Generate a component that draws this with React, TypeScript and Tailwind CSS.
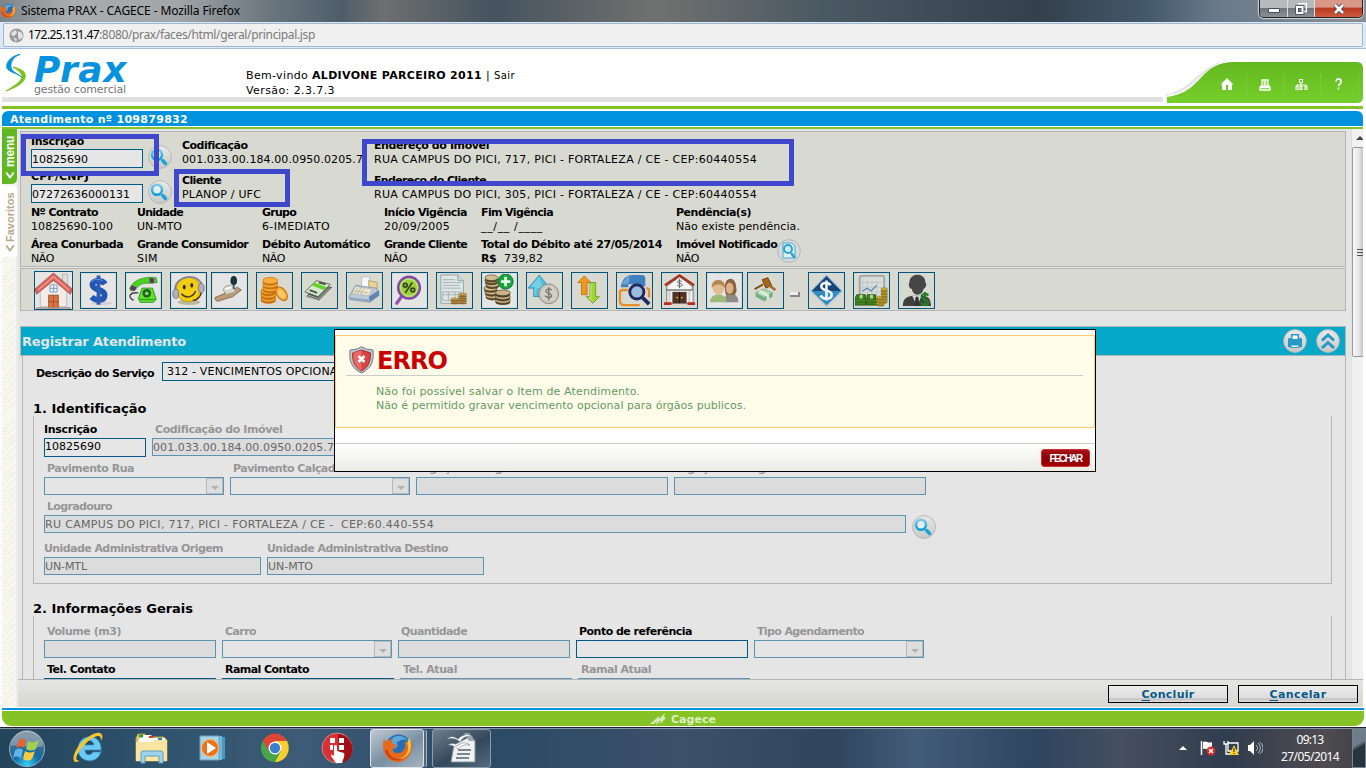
import { useLayoutEffect, useRef, useState } from "react";
import type { ReactNode } from "react";

const UI = "font-['Noto_Sans',sans-serif]";

/** A single line of text, letter-spaced so that it takes up `w` pixels. */
function Fit({ w, className = "", children }: { w: number; className?: string; children: ReactNode }) {
  const ref = useRef<HTMLSpanElement>(null);
  const [ls, setLs] = useState(0);
  useLayoutEffect(() => {
    const el = ref.current;
    if (!el) return;
    const len = (el.textContent || "").length;
    if (len > 0) setLs((w - el.getBoundingClientRect().width) / len);
  }, [w]);
  return (
    <span ref={ref} style={{ letterSpacing: ls + "px" }} className={"inline-block whitespace-pre " + className}>
      {children}
    </span>
  );
}

function Lens({ className = "" }: { className?: string }) {
  return (
    <svg className={"size-6 shrink-0 " + className} viewBox="0 0 24 24">
      <defs>
        <linearGradient id="disc" x1="0" y1="0" x2="0" y2="1">
          <stop offset="0" stopColor="#e9e9e9" />
          <stop offset="1" stopColor="#c9c9c9" />
        </linearGradient>
        <linearGradient id="lens" x1="0" y1="0" x2="0" y2="1">
          <stop offset="0" stopColor="#7cc8e6" />
          <stop offset="1" stopColor="#0a9fd2" />
        </linearGradient>
      </defs>
      <circle cx="12" cy="12" r="11.4" fill="url(#disc)" stroke="#b5b5b5" />
      <circle cx="9" cy="9.8" r="5" fill="#e4edf2" stroke="url(#lens)" strokeWidth="2.6" />
      <path d="M14.7 15.6l2.8 2.9" stroke="#18a5d6" strokeWidth="3.6" strokeLinecap="round" />
    </svg>
  );
}

function Stacked({ label, value, w, cls = "", lw, vw, prefix }: { label: string; value: string; w: number; cls?: string; lw: number; vw: number; prefix?: ReactNode }) {
  return (
    <div className={"shrink-0 leading-[14px] " + cls} style={{ width: w }}>
      <div className="h-[14px] font-bold"><Fit w={lw}>{label}</Fit></div>
      <div className="h-[14px]">{prefix}<Fit w={vw}>{value}</Fit></div>
    </div>
  );
}

type FieldProps = { label: string; lw: number; w: number; pad?: number; value?: string; vw?: number; on?: boolean; select?: boolean; tall?: boolean };
function Field({ label, lw, w, pad = 3, value, vw = 0, on, select, tall }: FieldProps) {
  return (
    <div className="shrink-0" style={{ width: w }}>
      <div className={"mb-px h-[14px] font-bold leading-[14px] " + (on ? "text-black" : "text-[#969696]")} style={{ paddingLeft: pad }}>
        <Fit w={lw}>{label}</Fit>
      </div>
      <div className={"flex justify-end border " + (tall ? "h-[19px] leading-[16px] " : "h-[18px] leading-[18px] ") + (on ? "border-[#005a87] bg-[#e6e6e6]" : select ? "border-[#5b93b1] bg-[#e5e5e5] text-[#666]" : "border-[#5b93b1] bg-[#dcdcdc] text-[#666]")}>
        {value && <span className="mr-auto"><Fit w={vw}>{value}</Fit></span>}
        {select && (
          <span className="flex h-[16px] w-[17px] items-center justify-center border border-[#b9b9b9] bg-[#dedede]">
            <svg className="mt-[3px] h-1 w-2" viewBox="0 0 8 4"><path d="M0 0h8L4 4z" fill="#b0b0b0" /></svg>
          </span>
        )}
      </div>
    </div>
  );
}

const coin = (x: number, y: number, rx: number, ry: number, f: string, s: string, k: string | number) => (
  <g key={k}><ellipse cx={x} cy={y + 2} rx={rx} ry={ry} fill={s} /><ellipse cx={x} cy={y} rx={rx} ry={ry} fill={f} stroke={s} strokeWidth=".7" /></g>
);

const tools: { gap: string; art: ReactNode; big?: boolean; plate?: boolean }[] = [
  { gap: "ml-[13px]", big: true, art: <>
    <rect x="26" y="2" width="5" height="10" fill="#ddd" stroke="#aaa" strokeWidth=".7" />
    <path d="M5 17L18 5l12 12v16H5z" fill="#f2ece9" stroke="#c9c0bd" />
    <path d="M0 16L17.500 1 35 16l-1.500 5L17.500 8 1.500 21z" fill="#e0675e" stroke="#a94b46" strokeWidth=".8" />
    <path d="M3 17L17.500 4.500 32 17" fill="none" stroke="#f0a09a" />
    <rect x="14" y="12" width="7" height="7" rx="2" fill="#eef4fb" stroke="#8fa3ca" /><path d="M17.500 12v7M14 15.500h7" stroke="#8fa3ca" />
    <rect x="13" y="22" width="9" height="12" fill="#dc7440" stroke="#a05832" /><path d="M17.500 22v12M13 28h9" stroke="#b0562c" />
    <path d="M1 34h33" stroke="#a9918d" strokeWidth="1.500" /></> },
  { gap: "ml-[7px]", plate: true, art: <>
    <ellipse cx="21" cy="31" rx="11" ry="2" fill="#cdd0d4" />
    <path d="M24.500 10.500C22 6.500 11 5.500 11 11.500c0 6.500 13 4 13 11 0 6.500-10 6-14 2" fill="none" stroke="#2555b2" strokeWidth="6" />
    <path d="M17.500 1.500v31" stroke="#2c5cb8" strokeWidth="4" /><path d="M10 9c2-4 8-4 12-2" stroke="#6b9de5" strokeWidth="1" fill="none" /></> },
  { gap: "ml-2", plate: true, art: <>
    <path d="M7 28c-7-4-4-9 5-8" fill="none" stroke="#47404a" strokeWidth="1.500" />
    <path d="M3 15C7 5 22 2 31 4l1 5-9 1C17 9 11 12 9 17l-5 1z" fill="#4bd323" stroke="#228615" strokeWidth=".7" /><path d="M5 12l5 2-2 4-5-2zM24 4l5 1-1 5-4-1z" fill="#62306d" />
    <path d="M16 15h11l4 12-3 3H14l-2-4z" fill="#5be328" stroke="#2b971a" /><circle cx="21" cy="20.500" r="4.500" fill="#235c1b" /><circle cx="21" cy="20.500" r="2" fill="#84d467" /><path d="M13 27h17" stroke="#2f941c" /></> },
  { gap: "ml-2", plate: true, art: <>
    <ellipse cx="18" cy="30" rx="12" ry="3" fill="#b9b6a1" /><circle cx="17.500" cy="16.500" r="13" fill="#f3ce11" stroke="#c2970a" />
    <path d="M3 18C2 1 30-3 32 14" fill="none" stroke="#85858f" strokeWidth="2" />
    <ellipse cx="4" cy="21" rx="3" ry="5" fill="#b1b1bf" stroke="#75757f" /><ellipse cx="31" cy="15" rx="3" ry="5" fill="#b1b1bf" stroke="#75757f" />
    <ellipse cx="13" cy="14" rx="1.500" ry="2.500" fill="#33290a" /><ellipse cx="21" cy="12" rx="1.500" ry="2.500" fill="#33290a" />
    <path d="M10 21c5 6 13 3 15-3M31 20c-1 5-5 8-9 8" fill="none" stroke="#463510" strokeWidth="1.500" /></> },
  { gap: "ml-1", plate: true, art: <>
    <path d="M2 25l12-5 12-6 4 3-9 7-16 5-2-1z" fill="#bd9c78" stroke="#755b42" strokeWidth=".8" /><path d="M11 17c0-5 8-7 11-2l2 4-10 3z" fill="#d6d6ca" stroke="#909086" strokeWidth=".8" />
    <ellipse cx="22" cy="7" rx="3.500" ry="5" fill="#16363c" /><path d="M22 11v5" stroke="#45636a" strokeWidth="2" /><path d="M13 16l7-2" stroke="#fff" strokeWidth="2" /></> },
  { gap: "ml-2", art: <>
    {[26, 22, 18].map((y) => coin(11, y, 8, 3.5, "#f3a42e", "#c77211", y))}
    {[15, 11, 7].map((y) => coin(13, y, 8, 3.5, "#f8ae3d", "#c77211", y))}
    <ellipse cx="25" cy="21" rx="5" ry="8" transform="rotate(-35 25 21)" fill="#f9ad3b" stroke="#c77211" strokeWidth="1.200" /><ellipse cx="25" cy="21" rx="3" ry="5" transform="rotate(-35 25 21)" fill="#ffc96a" /></> },
  { gap: "ml-2", art: <>
    <path d="M3 24L14 9l17 5-14 14z" fill="#4a514a" /><path d="M2 19L14 7l15 4-13 13z" fill="#d9e6cf" stroke="#404b3d" strokeWidth=".8" />
    <path d="M9 12l13 5 3-3-13-5z" fill="#64d421" /><path d="M7 17l8 3M17 9l7 2" stroke="#455a3e" strokeWidth="2" />
    <path d="M2 21l14 5 13-13M3 23l13 5 13-13" stroke="#cfd6cc" strokeWidth=".8" fill="none" /></> },
  { gap: "ml-2", art: <>
    <path d="M15 3h8l-1 12h-8z" fill="#f7f8fb" stroke="#aeb8c6" strokeWidth=".8" /><path d="M22 7l9 2v7l-9-2z" fill="#e9d392" stroke="#a79864" strokeWidth=".8" />
    <path d="M1 24l7-12 22 3 3 7-10 8-21-3z" fill="#bdc9d7" stroke="#7d92a9" strokeWidth=".8" /><path d="M8 13l18 3-4 7-18-2z" fill="#eee6cc" stroke="#a4abb5" strokeWidth=".7" />
    <path d="M11 14l-4 7M14 14l-4 7M17 15l-4 7M7 18l14 2" stroke="#a8a693" strokeWidth=".7" /><path d="M22 24l11-7v6l-10 7z" fill="#6386b1" /><path d="M2 25l20 2v2L2 27z" fill="#8da6c2" /></> },
  { gap: "ml-2", plate: true, art: <>
    <path d="M9 24L4 31" stroke="#9450b5" strokeWidth="3.500" strokeLinecap="round" /><circle cx="17" cy="14.500" r="11.500" fill="#a3dc49" stroke="#8647ac" strokeWidth="2.600" />
    <circle cx="17" cy="14.500" r="9" fill="#9bd13e" stroke="#c9ec87" /><path d="M20.500 9L13 20" stroke="#33451a" strokeWidth="1.800" /><circle cx="13" cy="12" r="2" fill="none" stroke="#33451a" strokeWidth="1.800" /><circle cx="21" cy="17" r="2" fill="none" stroke="#33451a" strokeWidth="1.800" /></> },
  { gap: "ml-2", art: <>
    <path d="M3 1h18l6 6v24H3z" fill="#dfe6e3" stroke="#8ca4ae" /><path d="M21 1v6h6" fill="#cad7d7" stroke="#8ca4ae" />
    <path d="M5 6h13M5 9h20M5 12h18M5 15h19M5 19h20v9H5zM5 22h20M11 19v9M18 19v9" fill="none" stroke="#a3b2b5" />
    {[29, 26.5].map((y) => coin(18, y, 4.5, 1, "#dfb468", "#8f692b", "a" + y))}{[29, 26.5, 24, 21.5].map((y) => coin(26, y, 4.5, 1, "#dfb468", "#8f692b", "b" + y))}</> },
  { gap: "ml-2", plate: true, art: <>
    {[23, 19, 15, 11, 7, 4].map((y) => coin(8 + (y % 3), y, 7, 3, "#d0bf91", "#59472a", y))}{[28, 24, 20].map((y) => coin(21, y, 8, 3, "#c7b384", "#504027", "c" + y))}
    <circle cx="24" cy="8" r="8" fill="#19a33d" stroke="#0e752a" /><path d="M24 3v10M19 8h10" stroke="#e6ffe9" strokeWidth="3" /></> },
  { gap: "ml-2", art: <>
    <path d="M0 15L12 1l11 14h-5v9H6v-9z" fill="#51bddc" stroke="#2c8baf" strokeWidth=".8" /><path d="M3 13L12 3l3 10-6 3-1 7H7V14z" fill="#82d5eb" opacity=".7" />
    <circle cx="22" cy="21" r="10.500" fill="#c9c5b9" stroke="#8b8982" /><circle cx="22" cy="21" r="8.500" fill="#d2cfc5" /><path d="M25 17c-2-2-6-1-6 1 0 3 6 2 6 5 0 2-5 3-7 0M22 14v14" stroke="#7b786d" strokeWidth="1.500" fill="none" /></> },
  { gap: "ml-2", art: <>
    <path d="M5 9l7-7 7 7h-4v13H9V9z" fill="#ee9821" stroke="#b36b0e" strokeWidth=".8" /><path d="M14 24h4V9h6v15h4l-7 7z" fill="#9bd732" stroke="#668f1c" strokeWidth=".8" /><path d="M19 11v14h-2l4 4" stroke="#d3f07d" fill="none" /></> },
  { gap: "ml-2", art: <>
    <path d="M3 14C4 6 8 1 16 1h9q4 0 4 4v8h-8v-2H11v3z" fill="#4080c0" /><path d="M3 11L12 1v6q0 4-4 4z" fill="#6fa1d4" />
    <path d="M11 17H5q-3 0-3 3v8q0 5 5 5h16M30 15q3 0 3 3v7" stroke="#e88e28" strokeWidth="2.500" fill="none" />
    <circle cx="20" cy="19" r="7.500" fill="#9abde0" stroke="#23285e" strokeWidth="3" /><path d="M26 25l7 7" stroke="#23285e" strokeWidth="4" /></> },
  { gap: "ml-2", art: <>
    <path d="M4 13h28v18H4z" fill="#f1f1f1" stroke="#777" /><path d="M4 13L17.500 3 31 13v4H4z" fill="#f5f5f5" stroke="#777" /><path d="M2 12L17.500 1.500 33 12" stroke="#a8321d" strokeWidth="2.500" fill="none" />
    <path d="M3 17h29" stroke="#777" /><rect x="10" y="19" width="15" height="12" fill="#523321" /><path d="M17.500 19v12" stroke="#221710" /><circle cx="15" cy="25" r="1" fill="#e8b33e" /><circle cx="20" cy="25" r="1" fill="#e8b33e" />
    <path d="M7 18v12M28 18v12" stroke="#ccc" strokeWidth="2" /><path d="M1 30h8v3H1zM26 30h8v3h-8z" fill="#bd2a1c" /><path d="M20 8c-5-3-6 2-2 2s3 5-3 2M17.500 5v10" stroke="#666" fill="none" /></> },
  { gap: "ml-2", plate: true, art: <>
    <path d="M18 30v-4c0-7 12-9 14 2v2z" fill="#8e8983" /><path d="M18 17c-2-15 12-16 12-2 1 4-1 6-2 7h-9z" fill="#8c613e" /><ellipse cx="23" cy="15" rx="4" ry="6" fill="#dbb18b" />
    <path d="M2 30c0-11 18-11 18 0z" fill="#9cbb7a" /><ellipse cx="11" cy="15" rx="6" ry="7" fill="#e4bc93" /><path d="M4 15C3 3 19 3 18 15c-2-4-10-6-14 0z" fill="#b28a4e" /></> },
  { gap: "ml-1", art: <>
    <path d="M7 20l8-4 10 4v4l-9 5-9-5z" fill="#70b286" /><path d="M7 20l8-4 10 4-9 5z" fill="#b3ddb5" stroke="#66a878" strokeWidth=".7" /><path d="M11 18l9 5v4" stroke="#e4eee2" strokeWidth="2.500" fill="none" />
    <path d="M15 11l-9 5" stroke="#815115" strokeWidth="2" /><path d="M14 6l6-2 4 8-6 3z" fill="#a56621" stroke="#69400f" /><path d="M20 11l8 6" stroke="#a56621" strokeWidth="2.500" /></> },
  { gap: "ml-6", art: <>
    <path d="M17.500 1L34 18 17.500 34 1 18z" fill="#1c5489" stroke="#afc6db" strokeWidth="1.500" /><path d="M2 18h31L17.500 33z" fill="#3fa4d3" opacity=".7" /><path d="M2 18L17.500 2 33 18z" fill="#123a72" opacity=".6" />
    <path d="M22 12c-3-4-10-3-10 1 0 6 11 3 11 9 0 5-8 6-12 1M17.500 7v21" stroke="#edf2f6" strokeWidth="2.800" fill="none" /></> },
  { gap: "ml-2", art: <>
    <rect x="5" y="2" width="26" height="24" rx="2" fill="#d9dedd" stroke="#a0a6a6" strokeWidth="2" /><path d="M8 4v20M13 4v20M18 4v20M23 4v20M7 9h22M7 14h22M7 19h22" stroke="#b5bbba" strokeWidth=".6" /><path d="M8 18l5-3 4 3 6-6" stroke="#5480a3" strokeWidth="1.200" fill="none" />
    <path d="M2 22h9v11H0v-7zM13 22h9v4l2 7H12z" fill="#43831f" stroke="#255712" /><path d="M2 26h21M1 30h22" stroke="#2e6617" strokeWidth=".8" /><path d="M5 22h3v4H5zM16 22h3v4h-3z" fill="#b9d794" />
    {[31, 28, 25].map((y) => coin(27, y, 4.5, 1.5, "#d3b03a", "#937b21", "l" + y))}{[28, 25, 22, 19, 16].map((y) => coin(31, y, 3.5, 1.5, "#d3b03a", "#937b21", y))}</> },
  { gap: "ml-2", art: <>
    <path d="M3 34c0-8 4-10 10-11h11c7 1 8 3 9 11z" fill="#404040" /><path d="M10 9c0-11 17-11 17 0 2 2 0 6-2 7-1 4-3 6-6.500 6s-5-2-6-6c-3-1-4-5-2.500-7z" fill="#464646" /><path d="M13 23l5 11 5-11" fill="#ddd" /><path d="M16.500 24h3l1 10h-5z" fill="#333" />
    <path d="M30 23c-2-3-7-2-7 1 0 4 7 2 7 6 0 4-6 4-8 0M26.500 19v15" stroke="#277926" strokeWidth="2.300" fill="none" /></> },
];

function WindowBar() {
  return (
    <div className={"h-[49px] bg-[#dce8f4] " + UI}>
      <div className="flex h-[22px] justify-between bg-[linear-gradient(90deg,#7d8589_0,#a9adaf_5%,#a2a6a8_13%,#6f7a82_19%,#4e5d69_25%,#6e6f70_28%,#45535e_36%,#70716f_48%,#4b5963_60%,#34404b_76%,#44596c_84%,#68798a_89%,#8b8f93_100%)]">
        <div className="flex items-start gap-[5px] text-[12px] leading-[22px] text-black">
          <FirefoxIcon cls="mt-[3px] size-4" />
          <Fit w={219}>Sistema PRAX - CAGECE - Mozilla Firefox</Fit>
        </div>
        <div className="mr-[3px] flex h-[18px] overflow-hidden rounded-b-[5px] border border-t-0 border-[#20272d] shadow-[0_0_1px_1px_#cfd4d8]">
          <span className="flex w-7 items-center justify-center border-r border-[#d9dde0] bg-[linear-gradient(#b6babd_45%,#70777c_50%,#8a9095)]">
            <span className="mt-[3px] h-[5px] w-[12px] rounded-[1px] border border-[#454c58] bg-white" />
          </span>
          <span className="flex w-[27px] items-center justify-center border-r border-[#d9dde0] bg-[linear-gradient(#b6babd_45%,#70777c_50%,#8a9095)]">
            <svg className="size-3" viewBox="0 0 12 12"><path d="M3 .5h8.500v8H9" fill="none" stroke="#fff" strokeWidth="1.500" /><path d="M2 4h5.500v6H2z" fill="#777" stroke="#454c58" strokeWidth="3.500" /><path d="M2 4h5.500v6H2z" fill="none" stroke="#fff" strokeWidth="2" /></svg>
          </span>
          <span className="flex w-[47px] items-center justify-center bg-[linear-gradient(#d99887_40%,#b93a23_50%,#ce5b3c)]">
            <svg className="h-3 w-3" viewBox="0 0 12 12"><path d="M2 2l8 8M10 2L2 10" stroke="#4e4652" strokeWidth="4.500" /><path d="M2 2l8 8M10 2L2 10" stroke="#fff" strokeWidth="2.500" /></svg>
          </span>
        </div>
      </div>
      <div className="flex h-[27px] items-start border-b border-[#a5bedb] px-[3px] pt-px">
        <div className="flex h-6 flex-1 items-center gap-1 rounded-[2px] border border-[#9fb8d1] bg-[#f0f0f0] pl-[5px] text-[12px] leading-[24px] text-[#7a7a7a]">
          <svg className="size-[15px]" viewBox="0 0 15 15"><circle cx="7.500" cy="7.500" r="7" fill="#999" /><path d="M3 4l4-2 1 3-3 3-3-1zM9 3l4 2 1 4-4 3-1-4zM4 9l4 2-1 3z" fill="#e4e4e4" /></svg>
          <span><Fit w={71} className="text-black">172.25.131.47</Fit><Fit w={216}>:8080/prax/faces/html/geral/principal.jsp</Fit></span>
        </div>
      </div>
    </div>
  );
}

function FirefoxIcon({ cls }: { cls: string }) {
  return (
    <svg className={cls} viewBox="0 0 32 32">
      <circle cx="17" cy="15" r="13.500" fill="#276eb4" /><path d="M9 7c4-6 14-5 18 1-5-3-9 0-12 2 3 4-2 7-5 6z" fill="#5ba9dd" />
      <path d="M2 6c1 2 2 2 3 3 2-2 4-3 7-3-2 2-2 3-1 5 3 0 4 1 3 3l-3 3c1 4 6 5 10 2 3-2 4-6 2-10 3 2 5 1 5-4 5 8 3 19-5 23C11 35-3 23 2 6z" fill="#e46b1d" />
      <path d="M28 5c5 11 0 21-11 22 8-2 12-9 9-17z" fill="#fbc33b" /><path d="M3 17c2 9 10 14 19 10-9 1-15-3-16-9z" fill="#c53d18" />
    </svg>
  );
}

function Header() {
  return (
    <div className="relative h-[57px] bg-white">
      <div className="flex h-12">
        <div className="flex w-[246px] shrink-0 pl-[5px]">
          <svg className="mt-[5px] h-[38px] w-[22px]" viewBox="0 0 22 38">
            <path d="M15 .5C8 1 0 8 2 14c2 5 13 5 16 11-2-4-12-7-12-12C5 8 9 2 15 .5z" fill="#0693de" stroke="#0693de" strokeWidth="1" />
            <path d="M8 13c7 2 14 4 12 11-2 6-11 10-19 13 8-5 15-9 16-14 0-4-4-7-9-10z" fill="#7cc322" stroke="#7cc322" strokeWidth="1" />
          </svg>
          <div className="ml-[7px]">
            <div className="mt-[2px] h-[32px] text-[36px] font-bold italic leading-[37px] text-[#0792df]"><Fit w={93}>Prax</Fit></div>
            <div className="h-[13px] text-[11px] leading-[14px] text-[#757575]"><Fit w={92}>gestão comercial</Fit></div>
          </div>
        </div>
        <div className="pt-[19px] text-[11px] leading-[15px] text-black">
          <div><Fit w={66}>Bem-vindo </Fit><Fit w={170} className="font-bold">ALDIVONE PARCEIRO 2011</Fit><Fit w={12}> | </Fit><Fit w={21} className="text-[10px]">Sair</Fit></div>
          <div><Fit w={89}>Versão: 2.3.7.3</Fit></div>
        </div>
      </div>
      <div className="ml-0.5 h-[5px] w-[1161px] bg-[#e1e1e1]" />
      <svg className="absolute right-[3px] top-[10px] h-11 w-[200px]" viewBox="0 0 200 44">
        <defs><linearGradient id="leaf" x1="0" y1="0" x2="0" y2="1"><stop offset="0" stopColor="#63b81f" /><stop offset="1" stopColor="#75cf2b" /></linearGradient></defs>
        <path d="M2 37C34 32 36 2 77 1" fill="none" stroke="#e6e6e6" strokeWidth="3" />
        <path d="M0 39C40 36 39 0 80 2" fill="none" stroke="#fff" strokeWidth="4" />
        <path d="M4 38C41 33 35 3 72 3h122q6 0 6 6v29q0 6-6 6H4z" fill="url(#leaf)" />
        <path d="M83.500 14v28M121.500 14v28M157.500 14v28M195.500 14v28" stroke="#79ca38" />
        <g transform="translate(58 19)"><path d="M6 0l6 6-1 1v5H7V7H5v5H1V7L0 6z" fill="#fff" /></g>
        <path d="M99 21h6v6h-6zM100.500 23h3M100.500 25h3M98 26.500l-1 2v2.500h10v-2.500l-1-2M97 28.500h10" fill="none" stroke="#fff" strokeWidth="1.300" />
        <path d="M136.500 20.500h3v3h-3zM138 23v4M134 28v-2h9v2M133 27.500h2v3h-2zM137 27.500h2v3h-2zM142 27.500h2v3h-2z" fill="none" stroke="#fff" strokeWidth="1.100" />
        <path d="M173 22.500c.5-4 5.500-3 5 .5 0 2-2.500 2-2.500 4M175.500 28.500v2" fill="none" stroke="#fff" strokeWidth="1.700" />
      </svg>
    </div>
  );
}

function Sidebar() {
  return (
    <div className="flex w-4 shrink-0 flex-col border-r-2 border-[#eeece0] bg-[repeating-linear-gradient(135deg,#fbfaf5_0_1.5px,#efeee3_1.5px_2.5px)]">
      <div className="flex h-[55px] w-[15px] flex-col items-center rounded-br-[5px] bg-[#62b722] pt-[4px] font-['Liberation_Sans',sans-serif] text-[12px] font-bold text-white">
        <span className="h-[34px] rotate-180 leading-[14px] tracking-[-0.2px] [writing-mode:vertical-rl]">menu</span>
        <svg className="mt-[3px] size-[10px]" viewBox="0 0 8 8"><path d="M1 2l3 4 3-4" fill="none" stroke="#fff" strokeWidth="1.500" /></svg>
      </div>
      <div className="mt-[2px] flex h-[71px] w-[15px] flex-col items-center rounded-r-[4px] bg-white pt-[4px] font-['Liberation_Sans',sans-serif] text-[11px] font-bold text-[#b5a98b]">
        <span className="h-[52px] rotate-180 leading-[14px] [writing-mode:vertical-rl]">Favoritos</span>
        <svg className="mt-px size-[10px]" viewBox="0 0 8 8"><path d="M1 2l3 4 3-4" fill="none" stroke="#b5a98b" strokeWidth="1.500" /></svg>
      </div>
    </div>
  );
}

function CustomerPanel() {
  return (
    <div className="relative h-[136px] border border-[#b4b4b4] bg-[#d8d9d0] pl-[10px] pt-[3px] text-black">
      <div className="flex h-[35px]">
        <div className="flex w-[151px] shrink-0">
          <div className="w-[112px] leading-[14px]">
            <div className="font-bold"><Fit w={53}>Inscrição</Fit></div>
            <div className="h-[19px] border border-[#005a87] bg-[#e6e6e6] leading-[20px]"><Fit w={56}>10825690</Fit></div>
          </div>
          <Lens className="ml-[5px] mt-[10px]" />
        </div>
        <Stacked cls="pt-1" w={192} label="Codificação" lw={65} value="001.033.00.184.00.0950.0205.7" vw={181} />
        <Stacked cls="pt-1" w={420} label="Endereço do Imóvel" lw={115} value="RUA CAMPUS DO PICI, 717, PICI - FORTALEZA / CE - CEP:60440554" vw={383} />
      </div>
      <div className="flex h-9">
        <div className="flex w-[151px] shrink-0">
          <div className="w-[112px] leading-[14px]">
            <div className="font-bold"><Fit w={58}>CPF/CNPJ</Fit></div>
            <div className="h-[19px] border border-[#005a87] bg-[#e6e6e6] leading-[20px]"><Fit w={98}>07272636000131</Fit></div>
          </div>
          <Lens className="ml-[5px] mt-[10px]" />
        </div>
        <Stacked cls="pt-1" w={192} label="Cliente" lw={39} value="PLANOP / UFC" vw={79} />
        <Stacked cls="pt-1" w={420} label="Endereço do Cliente" lw={112} value="RUA CAMPUS DO PICI, 305, PICI - FORTALEZA / CE - CEP:60440554" vw={383} />
      </div>
      <div className="flex h-8">
        <Stacked w={106} label="Nº Contrato" lw={67} value="10825690-100" vw={82} />
        <Stacked w={125} label="Unidade" lw={46} value="UN-MTO" vw={45} />
        <Stacked w={122} label="Grupo" lw={34} value="6-IMEDIATO" vw={68} />
        <Stacked w={97} label="Início Vigência" lw={83} value="20/09/2005" vw={66} />
        <Stacked w={195} label="Fim Vigência" lw={72} value="__/__ /____" vw={62} />
        <Stacked w={140} label="Pendência(s)" lw={75} value="Não existe pendência." vw={124} />
      </div>
      <div className="flex h-7">
        <Stacked w={106} label="Área Conurbada" lw={92} value="NÃO" vw={23} />
        <Stacked w={125} label="Grande Consumidor" lw={111} value="SIM" vw={21} />
        <Stacked w={122} label="Débito Automático" lw={108} value="NÃO" vw={23} />
        <Stacked w={97} label="Grande Cliente" lw={83} value="NÃO" vw={23} />
        <Stacked w={195} label="Total do Débito até 27/05/2014" lw={181} prefix={<span className="mr-[8px] font-bold"><Fit w={15}>R$</Fit></span>} value="739,82" vw={39} />
        <Stacked w={101} label="Imóvel Notificado" lw={101} value="NÃO" vw={23} />
        <svg className="mt-px size-6" viewBox="0 0 24 24"><circle cx="12" cy="12" r="11.300" fill="#d7d9da" stroke="#adb5b6" /><path d="M6 4h9l3 3v12H6z" fill="#e6eef1" stroke="#43a8ce" /><circle cx="11" cy="10" r="4" fill="#d2ebf3" stroke="#23a5d1" strokeWidth="2" /><path d="M14 14l4 5" stroke="#23a5d1" strokeWidth="2.500" /></svg>
      </div>
      <div className="absolute left-0 top-[2px] h-[42px] w-[138px] border-[5px] border-[#3f48cc]" />
      <div className="absolute left-[153px] top-[37px] h-[38px] w-[116px] border-[5px] border-[#3f48cc]" />
      <div className="absolute left-[341px] top-[7px] h-[47px] w-[432px] border-[5px] border-[#3f48cc]" />
    </div>
  );
}

function Toolbar() {
  return (
    <div className="mt-px flex h-[43px] items-start border border-[#b4b4b4] bg-[#d8d9d0] pt-[2px]">
      {tools.map((t, i) => (
        <div key={i} className={"flex shrink-0 " + t.gap}>
          <div className={"border border-[#00557f] " + (t.big ? "size-[39px] bg-[#e5e5e5]" : "mt-px size-[37px] p-px")}>
            <div className={"size-full " + (t.plate ? "bg-[#e5e5e5]" : "")}>
              <svg className="size-full" viewBox="0 0 35 35">{t.art}</svg>
            </div>
          </div>
          {i === 16 && <span className="-mr-4 ml-[6px] mt-[21px] h-[5px] w-[10px] border-b-2 border-r-2 border-[#888] bg-[#eee]" />}
        </div>
      ))}
    </div>
  );
}

function Service() {
  return (
    <>
      <div className="mt-[15px] flex h-[30px] shrink-0 items-center border border-[#adb5b6] bg-[#05a8c9] pl-px text-[13px] font-bold text-[#e5e5e5]">
        <span className="pt-[2px]"><Fit w={164}>Registrar Atendimento</Fit></span>
        <svg className="ml-auto mr-[9px] size-6" viewBox="0 0 24 24"><circle cx="12" cy="12" r="11.400" fill="url(#disc)" stroke="#b5b5b5" /><path d="M8 5h8v4h2l1 1v8h-2l-1 1H8l-1-1H5v-8l1-1h2z" fill="#2799c6" /><path d="M9.500 6.500h5V10h-5z" fill="#fff" /><path d="M8 16h8v2.500H8z" fill="#e2edf2" stroke="#159bce" strokeWidth=".8" /></svg>
        <svg className="mr-[5px] size-6" viewBox="0 0 24 24"><circle cx="12" cy="12" r="11.400" fill="url(#disc)" stroke="#b5b5b5" /><path d="M6 11.500l6-5.500 6 5.500M6 19l6-5.500 6 5.500" fill="none" stroke="#2799c6" strokeWidth="3" /></svg>
      </div>
      <div className="ml-0.5 h-[330px] shrink-0 border-x border-[#b4b4b4] pt-[6px]">
        <div className="flex h-[19px] pl-[13px]">
          <div className="w-[126px] font-bold leading-[24px] text-black"><Fit w={118}>Descrição do Serviço</Fit></div>
          <div className="w-[500px] border border-[#005a87] pl-1 leading-[18px] text-black"><Fit w={181}>312 - VENCIMENTOS OPCIONAIS</Fit></div>
        </div>
        <div className="mt-[20px] h-4 pl-[10px] text-[13px] font-bold leading-4 text-black"><Fit w={113}>1. Identificação</Fit></div>
        <div className="-mt-px ml-[10px] mr-[13px] h-[168px] border-x border-b border-[#b4b4b4] pl-[10px] pt-[7px]">
          <div className="flex gap-[6px]">
            <Field label="Inscrição" lw={53} w={102} pad={0} on tall value="10825690" vw={56} />
            <Field label="Codificação do Imóvel" lw={127} w={258} value="001.033.00.184.00.0950.0205.7" vw={181} />
          </div>
          <div className="mt-[5px] flex gap-[6px]">
            <Field label="Pavimento Rua" lw={87} w={180} select />
            <Field label="Pavimento Calçada" lw={109} w={180} select />
            <Field label="Ligação de Água" lw={98} w={252} />
            <Field label="Ligação de Esgoto" lw={108} w={252} />
          </div>
          <div className="mt-[5px] flex h-[33px] gap-[6px]">
            <Field label="Logradouro" lw={65} w={862} value="RU CAMPUS DO PICI, 717, PICI - FORTALEZA / CE -  CEP:60.440-554" vw={389} />
            <Lens className="mt-[15px]" />
          </div>
          <div className="mt-[9px] flex gap-[6px]">
            <Field label="Unidade Administrativa Origem" lw={179} w={217} pad={0} value="UN-MTL" vw={42} />
            <Field label="Unidade Administrativa Destino" lw={181} w={217} pad={0} value="UN-MTO" vw={45} />
          </div>
        </div>
        <div className="mt-[17px] h-4 pl-[10px] text-[13px] font-bold leading-4 text-black"><Fit w={160}>2. Informações Gerais</Fit></div>
        <div className="-mt-px ml-[10px] mr-[13px] h-[100px] border-x border-[#b4b4b4] pl-[10px] pt-[9px]">
          <div className="flex gap-[6px]">
            <Field label="Volume (m3)" lw={74} w={172} />
            <Field label="Carro" lw={31} w={170} select />
            <Field label="Quantidade" lw={66} w={172} />
            <Field label="Ponto de referência" lw={113} w={172} on />
            <Field label="Tipo Agendamento" lw={107} w={170} select />
          </div>
          <div className="mt-[5px] flex gap-[6px]">
            <Field label="Tel. Contato" lw={68} w={172} on />
            <Field label="Ramal Contato" lw={84} w={172} on />
            <Field label="Tel. Atual" lw={54} w={172} />
            <Field label="Ramal Atual" lw={70} w={172} />
          </div>
        </div>
      </div>
    </>
  );
}

function ScrollBar() {
  return (
    <div className="flex w-[12px] shrink-0 flex-col overflow-hidden border-l border-[#e0e0e0] bg-[#f0f0f0] pt-[5px]">
      <svg className="ml-[4px] h-[13px] w-2" viewBox="0 0 8 13"><path d="M0 6h8L4 2z" fill="#444" /></svg>
      <div className="flex h-[210px] w-[17px] flex-col justify-center gap-[2px] rounded-[2px] border border-[#979797] bg-[linear-gradient(90deg,#f8f8f8,#e2e2e2_45%,#c9c9cc_60%,#d5d5d8)] pl-1">
        <span className="h-px w-2 bg-[#555]" /><span className="h-px w-2 bg-[#555]" /><span className="h-px w-2 bg-[#555]" />
      </div>
    </div>
  );
}

function ErrorDialog() {
  return (
    <div className="absolute left-[334px] top-[329px] h-[143px] w-[762px] border border-black bg-white pt-[5px]">
      <div className="h-[93px] border border-[#fdcb68] bg-[#fffdea] pl-[10px] pt-[9px]">
        <div className="flex h-[31px] w-[737px] border-b border-[#ccc] pl-[3px]">
          <svg className="mt-px h-7 w-[25px]" viewBox="0 0 25 28">
            <path d="M12.500.7L17 3l7 1c1 11-1 18-11.500 23C2 22 0 15 1 4l7-1z" fill="#c2c6ce" stroke="#757b85" /><path d="M12.500 4l9 3c0 9-2 14-9 18-7-4-9-9-9-18z" fill="#db4444" stroke="#9d2b2f" /><path d="M4 7l8.500-3v21C6 21 4 16 4 7z" fill="#ee7771" opacity=".7" /><path d="M9.500 10l6 6M15.500 10l-6 6" stroke="#fff" strokeWidth="2.600" />
          </svg>
          <span className="ml-[3px] text-[24px] font-bold leading-[33px] text-[#c00]"><Fit w={70}>ERRO</Fit></span>
        </div>
        <div className="pl-[30px] pt-[9px] leading-[14px] text-[#629b62]">
          <div><Fit w={264}>Não foi possível salvar o Item de Atendimento.</Fit></div>
          <div><Fit w={370}>Não é permitido gravar vencimento opcional para órgãos publicos.</Fit></div>
        </div>
      </div>
      <div className="mt-[15px] flex h-7 justify-end border-t border-[#ccc] bg-linear-to-b from-white to-[#ebece4] pr-[5px] pt-[5px]">
        <button className="flex h-[18px] w-[49px] items-center justify-center rounded-[3px] border border-[#cc3131] bg-[linear-gradient(#a91318,#8c0005_50%,#a00006)] font-['Liberation_Sans_Narrow','Liberation_Sans',sans-serif] text-[10px] font-bold text-white"><Fit w={32}>FECHAR</Fit></button>
      </div>
    </div>
  );
}

function ActionButton({ k, rest, w }: { k: string; rest: string; w: number }) {
  return (
    <button className="h-[18px] w-[120px] border border-black bg-[linear-gradient(#ececec,#dedede_75%,#bebebe_80%,#e2e2e2)] text-[11px] font-bold leading-[18px] text-[#075a87]">
      <Fit w={w}><span className="underline underline-offset-2">{k}</span>{rest}</Fit>
    </button>
  );
}

function Taskbar() {
  return (
    <div className={"flex h-[41px] items-center border-t border-[#1b222b] bg-[linear-gradient(90deg,#24445b_0,#2f536e_12%,#3d5a76_22%,#294a65_35%,#3d5069_50%,#2f455d_61%,#435c79_67%,#2e4560_76%,#464f5f_82%,#303d4e_90%,#504b50_97%,#3d4148)] shadow-[inset_0_1px_0_#8394a2] " + UI}>
      <svg className="ml-2 mt-px size-[38px]" viewBox="0 0 38 38">
        <defs><radialGradient id="orb" cx=".5" cy=".95" r=".85"><stop offset="0" stopColor="#31d1fa" /><stop offset=".45" stopColor="#1569a4" /><stop offset="1" stopColor="#546d82" /></radialGradient></defs>
        <circle cx="19" cy="19" r="17.500" fill="url(#orb)" stroke="#8eb3c8" /><path d="M3 16a16 16 0 0132 0c-10 4-22-2-32 0z" fill="#fff" opacity=".3" />
        <path d="M11 10c3-2 5-1 7 0l-2 8c-2-2-5-2-8 0z" fill="#e46434" /><path d="M20 11c3 2 7 2 11-1l-3 9c-4 2-7 2-10 0z" fill="#a2cf4e" /><path d="M7 20c3-2 6-2 8 0l-2 8c-3-2-6-2-8 0z" fill="#5fb5e8" /><path d="M17 21c3 2 6 2 10 0l-3 8c-3 2-6 2-9 0z" fill="#fccb3f" />
      </svg>
      <svg className="ml-[26px] size-8" viewBox="0 0 32 32"><path d="M29 18c-1 15-23 14-23-1C6 1 30 0 29 18H13c0 6 6 6 8 2h8zM13 13h9c-1-6-8-6-9 0z" fill="#6bcaf3" stroke="#348fca" strokeWidth=".7" /><path d="M9 28C0 34-1 25 6 15 14 4 28-3 30 3c1 2 0 4-1 6 0-4-1-5-3-5C16 5 1 25 5 28c1 1 3 1 4 0z" fill="#f5c72f" /></svg>
      <svg className="ml-[30px] size-[36px]" viewBox="0 0 36 36"><path d="M2 8l2-4h7l2 3h17l3 3v21H2z" fill="#e4c66e" stroke="#b59448" /><path d="M6 5h11l2 3h12v5H4z" fill="#fff" /><path d="M5 6h4" stroke="#27a533" strokeWidth="3" /><path d="M15 7h4" stroke="#d53e2c" strokeWidth="2" /><path d="M24 9h4" stroke="#2b80cc" strokeWidth="2" /><path d="M2 12h16l3-2h12v21H2z" fill="#f9e4a0" /><path d="M7 33V23q0-2 2-2h18q2 0 2 2v10h-4v-7H11v7z" fill="#9dd4ec" stroke="#5ba1c5" /></svg>
      <svg className="ml-[29px] size-[28px]" viewBox="0 0 28 28"><path d="M7 3h19v22H7z" fill="#4d98bf" /><path d="M4 2h19v24H4z" fill="#73b6d7" /><path d="M1 2h19v24H1z" fill="#a8d2e4" stroke="#69a8c7" /><circle cx="11" cy="14" r="8.500" fill="#ed711d" stroke="#ffba76" /><path d="M8 8l9 6-9 6z" fill="#fff" /></svg>
      <svg className="ml-[33px] size-[30px]" viewBox="0 0 30 30"><circle cx="15" cy="15" r="14" fill="#47a64b" /><path d="M15 8h12c5 12-3 21-12 21l6-11z" fill="#fccd2e" /><path d="M3 8l6 10 6-10h12C21-2 9-2 3 8z" fill="#df4437" /><circle cx="15" cy="15" r="6.500" fill="#fff" /><circle cx="15" cy="15" r="5.200" fill="#3d7fce" /></svg>
      <svg className="ml-[31px] size-8" viewBox="0 0 32 32"><circle cx="16" cy="16" r="15" fill="#d73035" stroke="#c98a8b" /><path d="M17 2c20 2 18 29 1 29z" fill="#a50d15" /><path d="M9 6h5v5H9zM18 6h5v5h-5zM9 13h3v5H9zM18 13h5v5h-5z" fill="#fff" /><path d="M13 14q2-2 3 0v5l7 2q1 2-1 7l-1 3h-6l-5-7q0-3 3 0z" fill="#fff" /></svg>
      <div className="ml-[17px] flex h-[39px] w-[54px] items-center justify-center rounded-[3px] border border-[#dde3e8] bg-[linear-gradient(150deg,#bfc8d1,#7890a2_55%,#a7b4bf)] shadow-[3px_0_0_-1px_#53697d,4px_0_0_-1px_#a4b5c0]"><FirefoxIcon cls="size-[31px]" /></div>
      <div className="ml-2 flex h-[39px] w-[59px] items-center justify-center rounded-[3px] border border-[#8b9ba8] bg-[linear-gradient(150deg,#70808e,#33485b_55%,#556a7e)]">
        <svg className="size-8" viewBox="0 0 32 32"><path d="M8 13l17-9 4 5v21H5z" fill="#eff1f2" stroke="#83909a" /><path d="M18 1h5l6 8h-6z" fill="#9da4ab" /><path d="M1 7c5-4 8-2 11 0 5-5 11-6 15-2-6-2-10 0-13 5-4-4-8-4-13-3zM2 13c4-2 7-2 9 1 5-4 9-4 13-1-6-1-9 1-12 4-3-3-6-4-10-4z" fill="#fff" stroke="#65727d" strokeWidth=".5" /><path d="M12 18h13M11 22h13M10 26h13" stroke="#7a8791" strokeWidth="2" /></svg>
      </div>
      <div className="ml-auto flex h-full items-center text-white">
        <svg className="mr-[13px] h-1 w-2" viewBox="0 0 8 4"><path d="M0 4h8L4 0z" fill="#fff" /></svg>
        <svg className="mr-[7px] size-4" viewBox="0 0 16 16"><path d="M1.500 1v14" stroke="#fff" strokeWidth="1.500" /><path d="M3 2c4-2 4 2 9 0v7c-5 2-5-1-9 0z" fill="#fff" /><circle cx="11" cy="11" r="4.500" fill="#d82525" /><path d="M9 9l4 4M13 9l-4 4" stroke="#fff" strokeWidth="1.500" /></svg>
        <svg className="mr-[8px] size-4" viewBox="0 0 16 16"><path d="M5 3h10v8H5zM1 1v3h4V1M3 4v10h4M8 11v3" fill="none" stroke="#fff" strokeWidth="1.300" /><path d="M11 5l5 10H6z" fill="#f7cf27" /><path d="M11 8v4M11 13v1" stroke="#222" /></svg>
        <svg className="mr-[14px] size-4" viewBox="0 0 16 16"><path d="M1 5h2l4-4v14l-4-4H1z" fill="#fff" /><path d="M9 5c2 2 2 4 0 6M11 3c3 3 3 7 0 10M13 2c4 4 4 8 0 12" stroke="#ddd" strokeWidth=".8" fill="none" /></svg>
        <div className="w-[66px] text-center text-[12px] leading-[17px]"><div><Fit w={27}>09:13</Fit></div><div><Fit w={58}>27/05/2014</Fit></div></div>
        <div className="ml-[9px] h-10 w-[14px] border border-[#76828d] bg-[linear-gradient(150deg,#6e7d89_40%,#29333d_50%)]" />
      </div>
    </div>
  );
}

export default function App() {
  return (
    <div className="relative flex h-[768px] w-[1366px] flex-col overflow-hidden bg-white font-['DejaVu_Sans',sans-serif] text-[11px]">
      <WindowBar />
      <Header />
      <div className="mx-[2px] mr-[3px] flex h-[601px] flex-col">
        <div className="h-[3px] shrink-0 bg-[#84c225]" />
        <div className="mt-[2px] h-[15px] shrink-0 rounded-t-[6px] bg-[#0092df] pl-2 text-[11px] font-bold leading-[17px] text-white"><Fit w={178}>Atendimento nº 109879832</Fit></div>
        <div className="mt-px h-[2px] shrink-0 bg-[#84c225]" />
        <div className="flex h-[578px] shrink-0">
          <Sidebar />
          <div className="flex min-w-0 flex-1 flex-col">
            <div className="flex h-[550px] shrink-0">
              <div className="flex min-w-0 flex-1 flex-col overflow-hidden bg-[#e5e5e5] pl-[2px] pr-[5px] pt-[2px]">
                <CustomerPanel />
                <Toolbar />
                <Service />
              </div>
              <ScrollBar />
            </div>
            <div className="flex h-7 shrink-0 justify-end gap-[10px] border-t border-[#b4b4b4] bg-linear-to-b from-[#e5e5e5] to-[#d6d7ce] pr-[5px] pt-[5px]">
              <ActionButton k="C" rest="oncluir" w={53} />
              <ActionButton k="C" rest="ancelar" w={57} />
            </div>
          </div>
        </div>
      </div>
      <div className="mx-[2px] mt-px h-[2px] shrink-0 bg-[#0092df]" />
      <div className="mx-[2px] mb-px mt-px flex h-[15px] shrink-0 items-center justify-center gap-1 rounded-b-[9px] bg-[#84c225] text-[11px] font-bold leading-[15px] text-[#dcefc0]">
        <svg className="h-3 w-[17px]" viewBox="0 0 17 12"><path d="M0 11L9 3v3l6-6-1 4 2 1-6 6 1-4-5 5 1-4-3 3z" fill="#d6ecb5" /></svg>
        <span className="pt-px"><Fit w={45}>Cagece</Fit></span>
      </div>
      <Taskbar />
      <ErrorDialog />
    </div>
  );
}
